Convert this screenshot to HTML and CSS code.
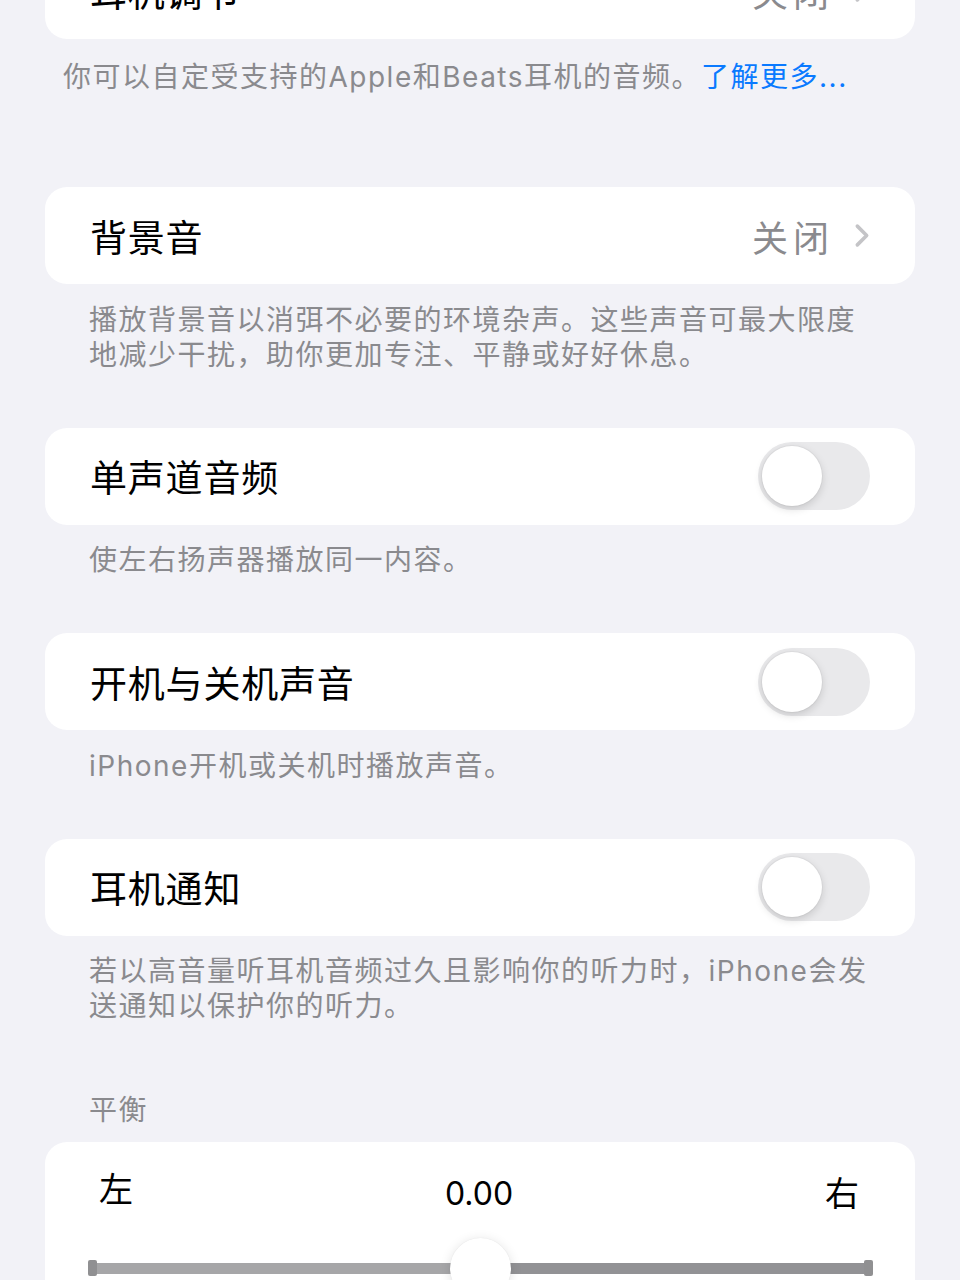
FILE: index.html
```html
<!DOCTYPE html>
<html lang="zh-CN">

<head>
  <meta charset="UTF-8">
  <meta name="viewport" content="width=device-width, initial-scale=1.0">
  <title>音频与视觉</title>
  <link rel="stylesheet" href="styles.css">
</head>

<body>
  <div class="page">

    <div class="group group--clipped">
      <div class="cell">
        <span class="cell-title">耳机调节</span>
        <span class="cell-detail">关闭<svg class="chevron" viewBox="0 0 15 24"><path d="M3 3 L12 12 L3 21" /></svg></span>
      </div>
    </div>
    <p class="note note--lead">你可以自定受支持的Apple和Beats耳机的音频。<a class="link" href="#">了解更多...</a></p>

    <div class="group">
      <div class="cell">
        <span class="cell-title">背景音</span>
        <span class="cell-detail">关闭<svg class="chevron" viewBox="0 0 15 24"><path d="M3 3 L12 12 L3 21" /></svg></span>
      </div>
    </div>
    <p class="note">播放背景音以消弭不必要的环境杂声。这些声音可最大限度<br>地减少干扰，助你更加专注、平静或好好休息。</p>

    <div class="group">
      <div class="cell">
        <span class="cell-title">单声道音频</span>
        <span class="switch"><span class="switch-knob"></span></span>
      </div>
    </div>
    <p class="note">使左右扬声器播放同一内容。</p>

    <div class="group">
      <div class="cell">
        <span class="cell-title">开机与关机声音</span>
        <span class="switch"><span class="switch-knob"></span></span>
      </div>
    </div>
    <p class="note">iPhone开机或关机时播放声音。</p>

    <div class="group">
      <div class="cell">
        <span class="cell-title">耳机通知</span>
        <span class="switch"><span class="switch-knob"></span></span>
      </div>
    </div>
    <p class="note">若以高音量听耳机音频过久且影响你的听力时，iPhone会发<br>送通知以保护你的听力。</p>

    <p class="section-title">平衡</p>
    <div class="group balance">
      <div class="balance-labels">
        <span class="balance-side balance-side--left">左</span>
        <span class="balance-value">0.00</span>
        <span class="balance-side balance-side--right">右</span>
      </div>
      <div class="slider">
        <span class="slider-cap"></span>
        <span class="slider-fill slider-fill--min"></span>
        <span class="slider-fill slider-fill--max"></span>
        <span class="slider-cap"></span>
        <span class="slider-thumb"></span>
      </div>
    </div>

  </div>
</body>

</html>
```

FILE: styles.css
```css
body {
  margin: 0;
  background-color: #f2f2f7;
  font-family: Inter, "Noto Sans CJK SC", sans-serif;
  overflow: hidden;
}

.page {
  padding: 0 45px;
}

/* grouped rows */
.group {
  background-color: #ffffff;
  border-radius: 22px;
}

.group--clipped {
  margin-top: -58px;
}

.cell {
  height: 97px;
  display: flex;
  align-items: center;
  justify-content: space-between;
  padding: 0 45px 0 45px;
}

.cell-title {
  font-size: 37px;
  letter-spacing: 0.8px;
  color: #000000;
}

.cell-detail {
  display: flex;
  align-items: center;
  font-size: 36px;
  letter-spacing: 5px;
  color: #8a8a8e;
}

.chevron {
  width: 16px;
  height: 25px;
  margin-left: 20px;
}

.chevron path {
  fill: none;
  stroke: #c4c4c7;
  stroke-width: 3.4;
  stroke-linecap: round;
  stroke-linejoin: round;
}

/* toggles (off) */
.switch {
  width: 112px;
  height: 68px;
  box-sizing: border-box;
  padding: 4px;
  border-radius: 34px;
  background-color: #e9e9eb;
  display: flex;
  align-items: center;
}

.switch-knob {
  width: 60px;
  height: 60px;
  border-radius: 50%;
  background-color: #ffffff;
  box-shadow: 0 3px 8px rgba(0, 0, 0, 0.15), 0 0 0 1px rgba(0, 0, 0, 0.03);
}

/* footers under groups */
.note {
  margin: 0;
  padding: 18.5px 44px 55px;
  font-size: 28px;
  line-height: 35px;
  letter-spacing: 1.5px;
  color: #8a8a8e;
}

.note--lead {
  padding: 20.5px 0 92.5px 18px;
}

.link {
  color: #0a7aff;
  text-decoration: none;
}

.section-title {
  margin: 0;
  padding: 13.5px 44px 14.5px;
  font-size: 28px;
  line-height: 35px;
  letter-spacing: 1.5px;
  color: #8a8a8e;
}

/* balance slider */
.balance {
  padding-bottom: 40px;
}

.balance-labels {
  display: grid;
  grid-template-columns: 1fr auto 1fr;
  align-items: center;
  padding: 30px 56px 0 54px;
  height: 36px;
}

.balance-side {
  font-size: 34px;
  line-height: 36px;
  color: #000000;
}

.balance-side--left {
  padding-bottom: 8px;
}

.balance-side--right {
  justify-self: end;
}

.balance-value {
  font-size: 32px;
  line-height: 36px;
  color: #000000;
}

.slider {
  position: relative;
  display: flex;
  align-items: center;
  height: 61px;
  margin-top: 29.5px;
  padding: 0 42px 0 43px;
}

.slider-cap {
  width: 9px;
  height: 16px;
  border-radius: 2px;
  background-color: #909092;
}

.slider-fill {
  flex: 1;
  height: 11px;
}

.slider-fill--min {
  background-color: #a6a6a8;
}

.slider-fill--max {
  background-color: #929295;
}

.slider-thumb {
  position: absolute;
  left: 50%;
  top: 0;
  width: 61px;
  height: 61px;
  margin-left: -30.5px;
  border-radius: 50%;
  background-color: #ffffff;
  box-shadow: 0 2px 12px rgba(0, 0, 0, 0.12), 0 0 1px rgba(0, 0, 0, 0.1);
}
```
